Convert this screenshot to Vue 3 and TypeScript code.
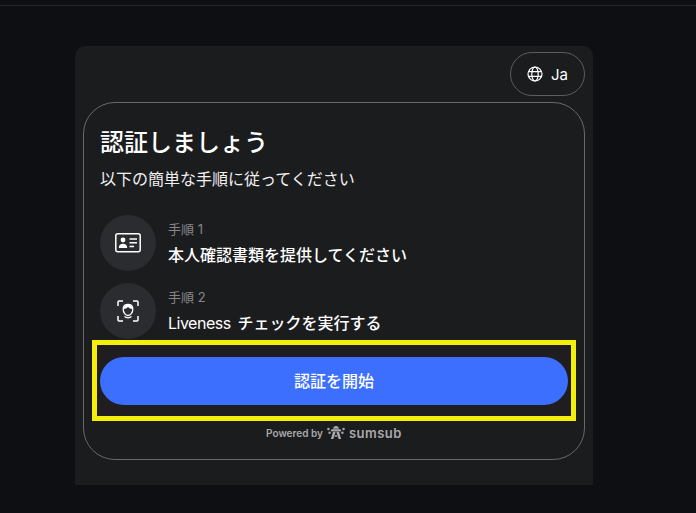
<template>
  <div class="page">
    <div class="top-line"></div>
    <section class="panel">
      <div class="panel-head">
        <button class="lang">
          <svg width="16" height="16" viewBox="0 0 16 16" fill="none" stroke="#fff" stroke-width="1.2">
            <circle cx="8" cy="8" r="7" />
            <ellipse cx="8" cy="8" rx="3.2" ry="7" />
            <path d="M1.400 5.700h13.200M1.400 10.300h13.200" />
          </svg>
          <span>Ja</span>
        </button>
      </div>
      <div class="card">
        <h1 class="title">認証しましょう</h1>
        <p class="subtitle">以下の簡単な手順に従ってください</p>
        <ul class="steps">
          <li v-for="step in steps" :key="step.label" class="step">
            <div class="step-icon">
              <svg v-if="step.icon === 'id'" width="26" height="20" viewBox="0 0 26 20" fill="none">
                <rect x=".8" y=".8" width="24.400" height="18" rx="2" stroke="#fff" stroke-width="1.500" />
                <circle cx="8" cy="7" r="2.400" fill="#fff" />
                <path d="M3.800 15c0-3 1.800-4.200 4.200-4.200s4.200 1.200 4.200 4.200z" fill="#fff" />
                <path d="M14.500 6h7.500M14.500 9.800h7.500M14.500 13.600h4.500" stroke="#fff" stroke-width="1.500" />
              </svg>
              <svg v-else width="22" height="22" viewBox="0 0 22 22" fill="none">
                <path d="M1 6V2a1 1 0 0 1 1-1h4M16 1h4a1 1 0 0 1 1 1v4M1 16v4a1 1 0 0 0 1 1h4M16 21h4a1 1 0 0 0 1-1v-4" stroke="#fff" stroke-width="1.500" />
                <path d="M11 4.500c3 0 4.800 2 4.800 4.800 0 3.400-2.300 6.200-4.800 6.200s-4.800-2.800-4.800-6.200c0-2.800 1.800-4.800 4.800-4.800z" stroke="#fff" stroke-width="1.300" />
                <path d="M6.500 9c1.800 0 3.400-.7 4.500-2 1.100 1.300 2.700 2 4.500 2-.2-2.500-1.800-4.200-4.500-4.200S6.700 6.500 6.500 9z" fill="#fff" />
                <path d="M7.500 16.500c1 .9 2.200 1.300 3.500 1.300s2.500-.4 3.500-1.300" stroke="#fff" stroke-width="1.200" />
              </svg>
            </div>
            <div class="step-text">
              <span class="step-label">{{ step.label }}</span>
              <span class="step-desc"><span v-if="step.latin" class="latin">{{ step.latin }}</span>{{ step.text }}</span>
            </div>
          </li>
        </ul>
        <div class="highlight">
          <button class="start">認証を開始</button>
        </div>
        <div class="powered">
          <span>Powered by</span>
          <svg width="18" height="14" viewBox="0 0 18 14" fill="#a9a9ab">
            <path d="M9 0c1.800 0 2.700 1.100 3 2.800H6C6.300 1.100 7.200 0 9 0z" />
            <rect x="3.800" y="3.200" width="10.400" height="2.200" rx="1.100" />
            <path d="M5.900 6h2.700l-2.200 7H3.900zM9.400 6h2.700l2 7h-2.500z" />
            <circle cx="1.400" cy="3" r="1.200" />
            <circle cx="2.600" cy="6.800" r="1.200" />
            <circle cx="16.600" cy="3" r="1.200" />
            <circle cx="15.400" cy="6.800" r="1.200" />
            <circle cx="9" cy="10" r="1.100" />
          </svg>
          <span class="brand">sumsub</span>
        </div>
      </div>
    </section>
  </div>
</template>

<script setup lang="ts">
interface Step {
  label: string;
  latin?: string;
  text: string;
  icon: 'id' | 'face';
}

const steps: Step[] = [
  { label: '手順 1', text: '本人確認書類を提供してください', icon: 'id' },
  { label: '手順 2', latin: 'Liveness', text: 'チェックを実行する', icon: 'face' }
];
</script>

<style>
html,
body {
  margin: 0;
  background: #0e0f12;
}
</style>

<style scoped>
.page {
  height: 513px;
  overflow: hidden;
  background: #0e0f12;
  font-family: Inter, 'Noto Sans CJK JP', sans-serif;
  color: #fff;
}

.top-line {
  height: 5px;
  border-bottom: 1px solid #24252a;
  margin-bottom: 40px;
}

.panel {
  width: 518px;
  height: 439px;
  margin-left: 75px;
  box-sizing: border-box;
  padding: 6px 8px 0;
  background: #1b1c1e;
  border-radius: 10px 10px 0 0;
}

.panel-head {
  display: flex;
  justify-content: flex-end;
  height: 50px;
}

.lang {
  display: flex;
  align-items: center;
  justify-content: center;
  gap: 8px;
  width: 75px;
  height: 44px;
  padding: 0;
  background: transparent;
  border: 1px solid #5b5c60;
  border-radius: 22px;
  color: #fff;
  font-family: inherit;
  font-size: 15px;
}

.card {
  height: 358px;
  box-sizing: border-box;
  padding: 26px 16px 0;
  border: 1px solid #68696d;
  border-radius: 32px;
}

.title {
  margin: 0;
  font-size: 24px;
  line-height: 28px;
  font-weight: 500;
}

.subtitle {
  margin: 12px 0 0;
  font-size: 16px;
  line-height: 20px;
  color: #f1f1f2;
}

.steps {
  list-style: none;
  margin: 26px 0 0;
  padding: 0;
  display: flex;
  flex-direction: column;
  gap: 12px;
}

.step {
  display: flex;
  align-items: center;
  gap: 12px;
}

.step-icon {
  display: flex;
  align-items: center;
  justify-content: center;
  width: 56px;
  height: 56px;
  border-radius: 50%;
  background: #2b2c2f;
}

.step-text {
  display: flex;
  flex-direction: column;
  gap: 6px;
}

.step-label {
  font-size: 13px;
  line-height: 18px;
  color: #85868a;
}

.step-desc {
  font-size: 16px;
  line-height: 22px;
  font-weight: 500;
}

.latin {
  margin-right: 7px;
  letter-spacing: -0.5px;
  font-weight: 400;
}

.highlight {
  margin: 1px -8px 0;
  height: 81px;
  box-sizing: border-box;
  padding: 12px 3px 0;
  border: 5px solid #f3ee0c;
  background: #1f1d1f;
}

.start {
  display: block;
  width: 100%;
  height: 48px;
  padding: 0 0 2px;
  border: none;
  border-radius: 24px;
  background: #3d6fff;
  color: #fff;
  font-family: inherit;
  font-size: 16px;
  font-weight: 500;
}

.powered {
  display: flex;
  align-items: center;
  justify-content: center;
  gap: 4px;
  margin-top: 3px;
  height: 17px;
  color: #a9a9ab;
  font-size: 10px;
  font-weight: 600;
}

.brand {
  font-size: 13px;
  font-weight: 600;
  letter-spacing: 0.5px;
}
</style>
